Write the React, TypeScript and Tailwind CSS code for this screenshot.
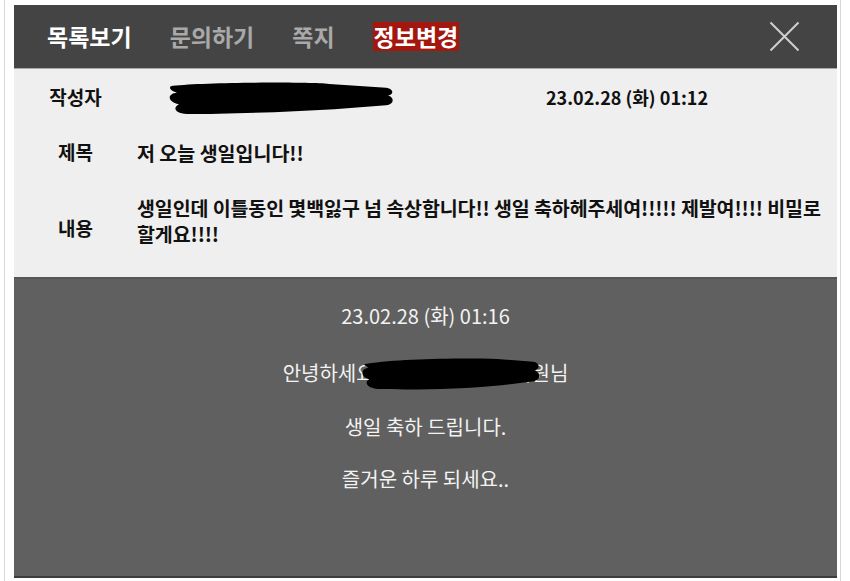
const tabs = [
  { name: '목록보기', tone: 'text-white' },
  { name: '문의하기', tone: 'text-[#a9a9a9]' },
  { name: '쪽지', tone: 'text-[#a9a9a9]' },
];

function Scribble({ className, d }: { className: string; d: string }) {
  return (
    <svg className={className} viewBox="0 0 230 36" preserveAspectRatio="none">
      <path d={d} fill="#000" />
    </svg>
  );
}

const nameBlot =
  'M8,6 C40,2 140,2 165,4 L222,8 C230,9 230,15 224,16 C231,18 230,25 222,26 L170,30 C120,33 60,35 22,35 C9,34 8,28 14,25 C2,22 2,14 12,13 C3,10 4,6 8,6 Z';

const greetBlot =
  'M10,8 C50,3 120,2 175,3 L220,6 C229,7 229,13 222,15 C230,17 230,24 221,26 L180,30 C130,34 70,35 24,34 C10,33 6,27 13,24 C1,21 2,13 12,12 C5,9 6,8 10,8 Z';

export default function App() {
  return (
    <div className="w-[850px] h-[581px] bg-white font-['Noto_Sans_CJK_KR',sans-serif] overflow-hidden">
      <div className="ml-[4px] w-[837px] h-full border-x border-[#d6d6d6] pl-[9px] pr-[3px] pt-[5px] flex flex-col">
        {/* Top bar */}
        <header className="h-[64px] bg-[#444444] border-b border-[#a8a8a8] flex items-center pl-[33px] pr-[37px] shrink-0">
          <nav className="flex items-center gap-[38px] text-[23px] font-bold leading-none">
            {tabs.map((t) => (
              <span key={t.name} className={t.tone}>
                {t.name}
              </span>
            ))}
            <span className="bg-[#a3170f] text-white px-[1px] py-[3px]">정보변경</span>
          </nav>
          <svg className="ml-auto h-[31px] w-[31px]" viewBox="0 0 31 31">
            <path d="M1.5 1.5 L29.5 29.5 M29.5 1.5 L1.5 29.5" stroke="#cfcfcf" strokeWidth="2" />
          </svg>
        </header>

        {/* Question */}
        <section className="bg-[#efefef] border-b-2 border-[#565656] shrink-0 text-[#111] font-bold">
          <div className="h-[56px] flex items-center">
            <div className="w-[123px] text-center text-[19px]">작성자</div>
            <div className="w-[409px]">
              <Scribble className="ml-[28px] w-[229px] h-[35px]" d={nameBlot} />
            </div>
            <div className="text-[18px] font-semibold">23.02.28 (화) 01:12</div>
          </div>
          <div className="h-[55px] flex items-center text-[19.5px]">
            <div className="w-[123px] text-center text-[19px]">제목</div>
            <div>저 오늘 생일입니다!!</div>
          </div>
          <div className="h-[86px] flex items-center text-[19.5px] mb-[11px]">
            <div className="w-[123px] text-center text-[19px] mt-[10px]">내용</div>
            <div className="flex-1 leading-[26px] mb-[4px] break-keep tracking-[-0.1px]">
              생일인데 이틀동인 몇백잃구 넘 속상함니다!! 생일 축하헤주세여!!!!! 제발여!!!! 비밀로 할게요!!!!
            </div>
          </div>
        </section>

        {/* Answer */}
        <section className="flex-1 bg-[#606060] border-b-2 border-[#3c3c3c] mb-[3px] flex flex-col items-center text-[20px] leading-[26px] text-[#f3f3f3]">
          <div className="mt-[24px]">23.02.28 (화) 01:16</div>
          <div className="mt-[31px] relative">
            안녕하세요 <span className="tracking-[-1.5px]">○○○○○○○</span> 회원님
            <Scribble className="absolute left-[76px] top-[-4px] w-[182px] h-[35px]" d={greetBlot} />
          </div>
          <div className="mt-[28px]">생일 축하 드립니다.</div>
          <div className="mt-[26px]">즐거운 하루 되세요..</div>
        </section>
      </div>
    </div>
  );
}
